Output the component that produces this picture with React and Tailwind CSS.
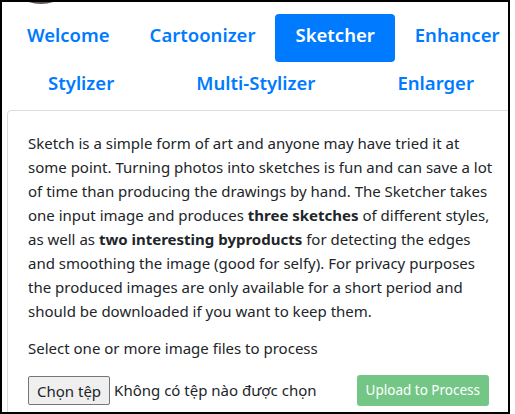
import React from "react";

const navTop = ["Welcome", "Cartoonizer", "Sketcher", "Enhancer"];
const navBottom = ["Stylizer", "Multi-Stylizer", "Enlarger"];

export default function App() {
  return (
    <div className="w-[515px] h-[414px] bg-white">
      <div className="w-[510px] h-[414px] border-2 border-black overflow-hidden bg-white font-['Noto_Sans',sans-serif] text-[#212529]">
        <div className="relative h-0">
          <div className="absolute left-[-1px] top-[-78px] w-[80px] h-[80px] rounded-full bg-[radial-gradient(circle_at_50%_85%,#5a4a4a,#9a9090)]" />
        </div>
        <nav className="ml-[5px] mt-[12px] w-[508px]">
          <div className="flex">
            {navTop.map((t) => (
              <div
                key={t}
                className={
                  "h-12 px-5 flex items-center text-[18.5px] font-semibold leading-[30px] pb-[6px] rounded-[4px] " +
                  (t === "Sketcher" ? "bg-[#007bff] text-white" : "text-[#007bff]")
                }
              >
                {t}
              </div>
            ))}
          </div>
          <div className="flex">
            {navBottom.map((t) => (
              <div
                key={t}
                className="flex-auto h-12 px-5 flex items-center justify-center text-[18.5px] font-semibold leading-[30px] pb-[6px] text-[#007bff]"
              >
                {t}
              </div>
            ))}
          </div>
        </nav>
        <div className="ml-[5px] w-[520px] border border-[#dcdcdc] rounded-[4px] p-5">
          <p className="text-[15px] leading-6 whitespace-nowrap">
            Sketch is a simple form of art and anyone may have tried it at
            <br />
            some point. Turning photos into sketches is fun and can save a lot
            <br />
            of time than producing the drawings by hand. The Sketcher takes
            <br />
            one input image and produces <b>three sketches</b> of different styles,
            <br />
            as well as <b>two interesting byproducts</b> for detecting the edges
            <br />
            and smoothing the image (good for selfy). For privacy purposes
            <br />
            the produced images are only available for a short period and
            <br />
            should be downloaded if you want to keep them.
          </p>
          <div className="mt-[13px] text-[15px] leading-6">Select one or more image files to process</div>
          <div className="mt-[15px] w-[461px] flex items-center justify-between">
            <div className="flex items-center text-[15px]">
              <span className="h-[29px] px-2 flex items-center border border-[#767676] rounded-[2px] bg-[#efefef] leading-5">
                Chọn tệp
              </span>
              <span className="ml-1">Không có tệp nào được chọn</span>
            </div>
            <span className="h-[31px] px-[9px] flex items-center rounded-[3px] bg-[#73c686] text-white text-[13.5px] leading-[21px]">
              Upload to Process
            </span>
          </div>
        </div>
      </div>
    </div>
  );
}
